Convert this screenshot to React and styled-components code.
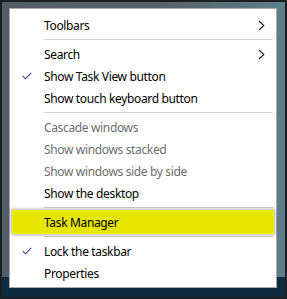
import React from "react";
import styled, { createGlobalStyle } from "styled-components";

const GlobalStyle = createGlobalStyle`
  html, body {
    margin: 0;
    padding: 0;
  }
  body {
    font-family: "Noto Sans", "Open Sans", sans-serif;
  }
`;

const Screen = styled.div`
  width: 287px;
  height: 299px;
  box-sizing: border-box;
  border: 2px solid #1c1f22;
  padding: 6px 0 0 7px;
  background:
    linear-gradient(to bottom, transparent 275px, #0f2b40 275px),
    linear-gradient(to right, #535d69 0%, #56646f 60%, #5e7e89 100%);
`;

const Menu = styled.div`
  width: 268px;
  height: 280px;
  box-sizing: border-box;
  background: #ffffff;
  border: 1px solid #a9a9a9;
  padding: 5px 2px;
  display: flex;
  flex-direction: column;
`;

const Row = styled.div`
  position: relative;
  flex: none;
  display: flex;
  align-items: center;
  box-sizing: border-box;
  font-size: 12px;
  letter-spacing: -0.35px;
  color: ${(props) => (props.disabled ? "#6d6d6d" : "#000")};
  background: ${(props) => (props.highlight ? "#e6e600" : "transparent")};
  border: ${(props) => (props.highlight ? "1px solid #f2f200" : "none")};
  box-shadow: ${(props) =>
    props.highlight ? "0 0 3px 1px rgba(0, 0, 0, 0.3)" : "none"};
  height: ${(props) => (props.highlight ? "24px" : "22px")};
  margin: ${(props) => (props.highlight ? "-1px 0" : "0")};
  padding-left: ${(props) => (props.highlight ? "31px" : "32px")};
`;

const Label = styled.span`
  flex: 1;
  white-space: nowrap;
`;

const Check = styled.svg`
  position: absolute;
  left: 10px;
  top: 7px;
`;

const Chevron = styled.svg`
  margin-right: 9px;
`;

const Separator = styled.div`
  height: 1px;
  flex: none;
  background: #cfcfcf;
  margin: 3px 1px 3px 32px;
`;

const CheckIcon = () => (
  <Check width="10" height="8" viewBox="0 0 10 8">
    <path d="M0.8 4.2 L3.4 6.8 L9.2 0.8" fill="none" stroke="#24437a" strokeWidth="1.1" />
  </Check>
);

const ChevronIcon = () => (
  <Chevron width="7" height="11" viewBox="0 0 7 11">
    <path d="M1 1 L5.8 5.5 L1 10" fill="none" stroke="#1a1a1a" strokeWidth="1.1" />
  </Chevron>
);

const Item = ({ label, checked, submenu, disabled, highlight }) => (
  <Row disabled={disabled} highlight={highlight}>
    {checked && <CheckIcon />}
    <Label>{label}</Label>
    {submenu && <ChevronIcon />}
  </Row>
);

const App = () => (
  <>
    <GlobalStyle />
    <Screen>
      <Menu>
        <Item label="Toolbars" submenu />
        <Separator />
        <Item label="Search" submenu />
        <Item label="Show Task View button" checked />
        <Item label="Show touch keyboard button" />
        <Separator />
        <Item label="Cascade windows" disabled />
        <Item label="Show windows stacked" disabled />
        <Item label="Show windows side by side" disabled />
        <Item label="Show the desktop" />
        <Separator />
        <Item label="Task Manager" highlight />
        <Separator />
        <Item label="Lock the taskbar" checked />
        <Item label="Properties" />
      </Menu>
    </Screen>
  </>
);

export default App;
